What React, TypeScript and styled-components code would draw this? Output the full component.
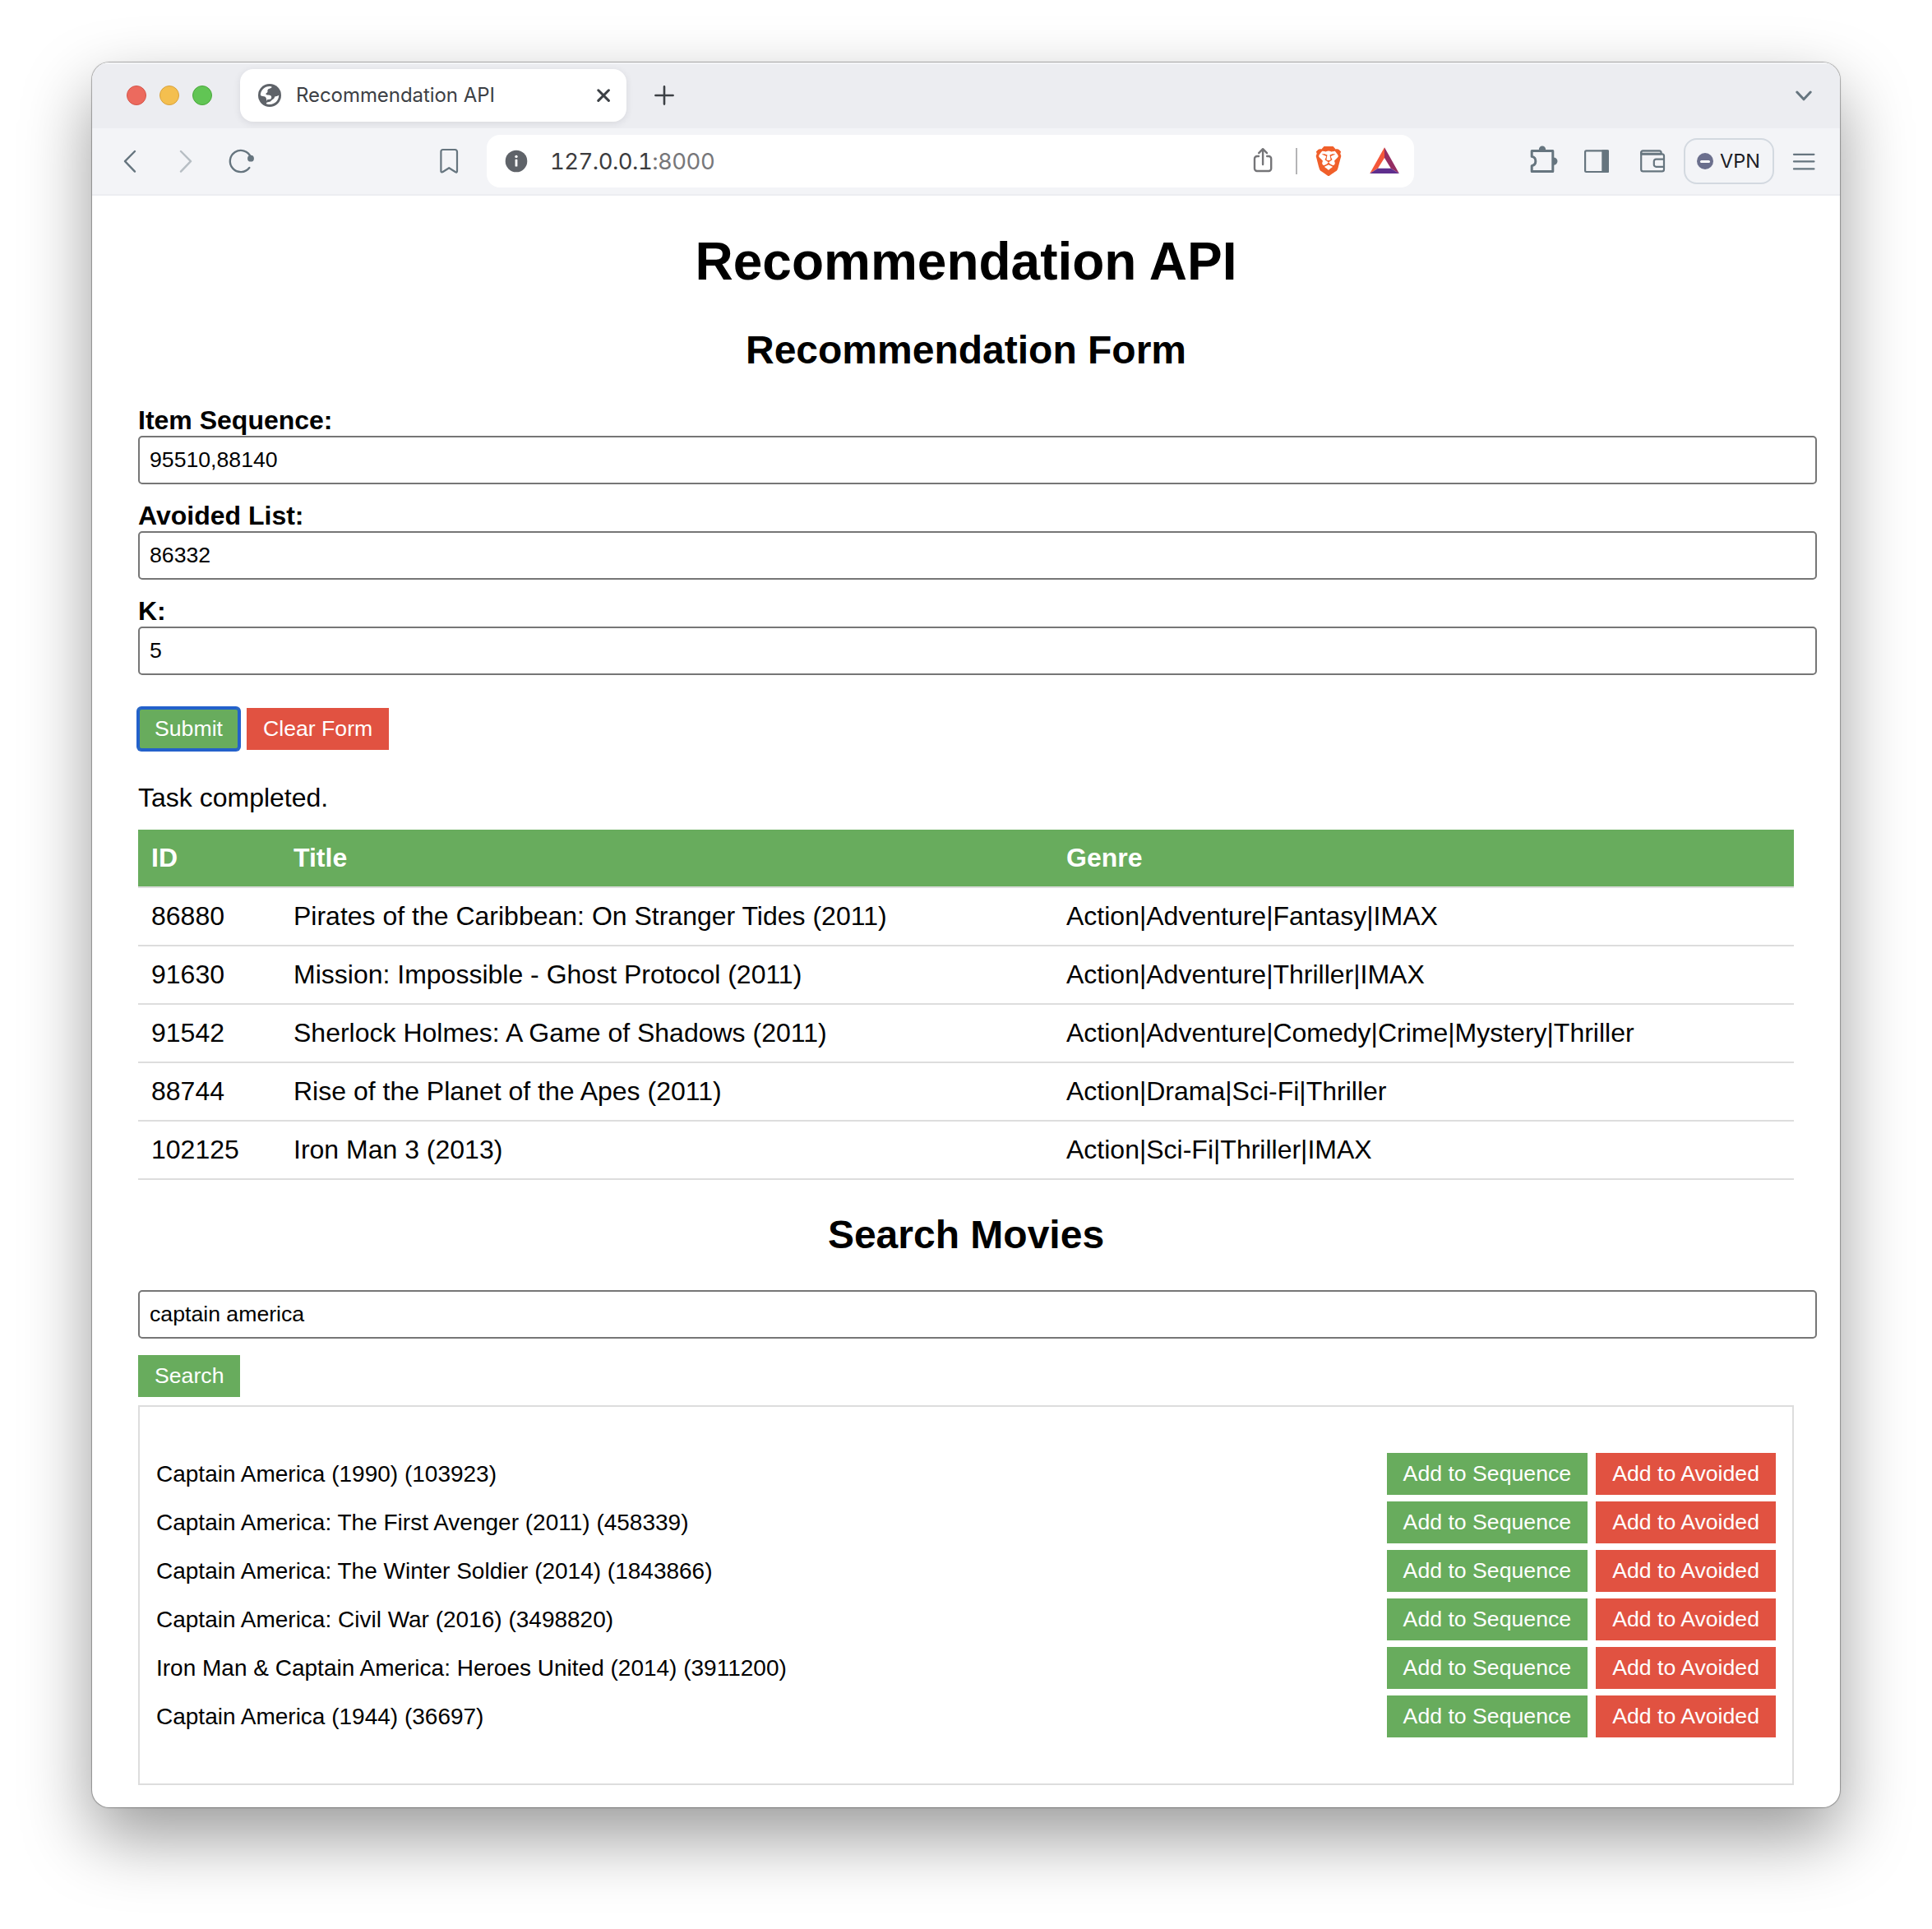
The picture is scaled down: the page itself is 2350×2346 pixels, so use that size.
import React from "react";
import styled, { createGlobalStyle } from "styled-components";
import { SiBrave } from "react-icons/si";

const GlobalStyle = createGlobalStyle`
  html, body { margin: 0; background: #fff; }
  body { font-family: "Liberation Sans", Arial, sans-serif; }
`;

const slate = "#66757f";
const green = "#68ac5d";
const red = "#e15241";
const uiFont = `Inter, "Liberation Sans", sans-serif`;

/* ---------- window ---------- */

const Desktop = styled.div`
  box-sizing: border-box;
  width: 2350px;
  height: 2346px;
  padding: 76px 112px 0;
  overflow: hidden;
  background: #fff;
`;

const Window = styled.div`
  height: 2122px;
  border-radius: 21px;
  background: #fff;
  overflow: hidden;
  display: flex;
  flex-direction: column;
  box-shadow: 0 0 0 1px rgba(0, 0, 0, 0.22), 0 0 3px rgba(0, 0, 0, 0.2), 0 36px 84px rgba(0, 0, 0, 0.4);
`;

const TabStrip = styled.div`
  flex: none;
  box-sizing: border-box;
  height: 80px;
  padding: 0 34px 0 42px;
  display: flex;
  align-items: center;
  background: #ecedf1;
  box-shadow: inset 0 2px 0 #f4f5f7;
`;

const Lights = styled.div`
  display: flex;
  gap: 16px;
  margin-right: 34px;
`;

const Light = styled.span<{ $fill: string; $edge: string }>`
  box-sizing: border-box;
  width: 24px;
  height: 24px;
  border-radius: 50%;
  background: ${(p) => p.$fill};
  border: 1px solid ${(p) => p.$edge};
`;

const Tab = styled.div`
  box-sizing: border-box;
  width: 470px;
  height: 64px;
  padding: 0 20px 0 22px;
  margin-right: 34px;
  display: flex;
  align-items: center;
  border-radius: 16px;
  background: #fff;
  box-shadow: 0 2px 8px rgba(40, 40, 60, 0.1);
`;

const TabTitle = styled.span`
  flex: 1;
  margin-left: 18px;
  font: 400 24px/32px ${uiFont};
  letter-spacing: -0.06px;
  color: #3c4045;
  white-space: nowrap;
`;

const Spacer = styled.span`
  flex: 1;
`;

const Toolbar = styled.div`
  flex: none;
  box-sizing: border-box;
  height: 82px;
  padding: 0 24px 0 28px;
  display: flex;
  align-items: center;
  background: #f3f4f7;
  border-bottom: 2px solid #ecedf1;
`;

const NavButtons = styled.div`
  display: flex;
  gap: 32px;
  margin-right: 216px;
`;

const AddressBar = styled.div`
  box-sizing: border-box;
  width: 1128px;
  height: 64px;
  margin-left: 28px;
  padding: 0 16px 0 22px;
  display: flex;
  align-items: center;
  border-radius: 16px;
  background: #fff;
`;

const Url = styled.span`
  margin-left: 27px;
  font: 400 27.5px/36px ${uiFont};
  font-variant-numeric: tabular-nums;
  letter-spacing: -0.55px;
  color: #3c3c3e;
`;

const Port = styled.span`
  color: #77777a;
`;

const Divider = styled.span`
  width: 2px;
  height: 32px;
  margin: 0 18px 0 22px;
  background: #b4b4b6;
`;

const Shield = styled.span`
  width: 40px;
  height: 40px;
  margin-right: 28px;
  display: flex;
  align-items: center;
  justify-content: center;
  color: #f05f2a;
`;

const Extensions = styled.div`
  display: flex;
  align-items: center;
  margin-left: auto;
`;

const ToolIcon = styled.span<{ $after: number }>`
  display: flex;
  margin-right: ${(p) => p.$after}px;
`;

const VpnButton = styled.div`
  box-sizing: border-box;
  width: 110px;
  height: 56px;
  margin-right: 16px;
  padding-left: 14px;
  display: flex;
  align-items: center;
  gap: 8px;
  border: 2px solid #d3d9e0;
  border-radius: 16px;
  font: 400 23.5px/32px ${uiFont};
  color: #1c1d26;
`;

const VpnDot = styled.span`
  width: 20px;
  height: 20px;
  border-radius: 50%;
  background: #6b6f8d;
  display: flex;
  align-items: center;
  justify-content: center;
  &::after {
    content: "";
    width: 12px;
    height: 3px;
    border-radius: 2px;
    background: #fff;
  }
`;

/* ---------- page ---------- */

const Page = styled.main`
  flex: 1;
  padding: 43px 56px 0;
  color: #000;
  font-size: 32px;
  line-height: 37px;
`;

const Title = styled.h1`
  margin: 0 0 43px;
  font-size: 64px;
  line-height: 74px;
  text-align: center;
`;

const Heading = styled.h2`
  margin: 0 0 40px;
  font-size: 48px;
  line-height: 55px;
  text-align: center;
`;

const Field = styled.label`
  display: block;
  font-weight: bold;
`;

const TextInput = styled.input`
  display: block;
  box-sizing: border-box;
  width: calc(100% + 28px);
  height: 59px;
  margin: 0 0 20px;
  padding: 12px;
  border: 2px solid #767676;
  border-radius: 5px;
  outline: none;
  background: #fff;
  color: #000;
  font: 400 26.67px/31px "Liberation Sans", Arial, sans-serif;
`;

const Button = styled.button<{ $tone: string; $focused?: boolean }>`
  height: 51px;
  margin: 0;
  padding: 0 20px;
  border: none;
  background: ${(p) => p.$tone};
  color: #fff;
  font: 400 26.67px/31px "Liberation Sans", Arial, sans-serif;
  white-space: nowrap;
  ${(p) => p.$focused && `
    border-radius: 4px;
    box-shadow: 0 0 0 2px #2361cb, inset 0 0 0 2px #2361cb;
  `}
`;

const FormActions = styled.div`
  display: flex;
  gap: 9px;
  padding-top: 20px;
  margin-bottom: 40px;
`;

const Status = styled.p`
  margin: 0 0 20px;
`;

const Table = styled.table`
  width: 100%;
  margin-bottom: 39px;
  table-layout: fixed;
  border-collapse: separate;
  border-spacing: 0;
`;

const Column = styled.col<{ $w?: number }>`
  ${(p) => p.$w && `width: ${p.$w}px;`}
`;

const HeadCell = styled.th`
  height: 37px;
  padding: 16px;
  text-align: left;
  background: ${green};
  background-clip: padding-box;
  color: #fff;
  border-bottom: 2px solid #ddd;
`;

const Cell = styled.td`
  height: 37px;
  padding: 16px;
  border-bottom: 2px solid #ddd;
`;

const Results = styled.div`
  margin-top: 10px;
  padding: 20px;
  border: 2px solid #ddd;
`;

const ResultList = styled.ul`
  list-style: none;
  margin: 32px 0;
  padding: 0;
`;

const ResultRow = styled.li`
  display: flex;
  align-items: center;
  gap: 10px;
  height: 51px;
  padding: 4px 0;
  font-size: 28px;
  line-height: 32px;
`;

const ResultName = styled.span`
  flex: 1;
`;

/* ---------- icons ---------- */

type IconProps = { size: number; color?: string; width?: number; opacity?: number; children: React.ReactNode };

const IconSvg = styled.svg`
  flex: none;
  fill: none;
  stroke-linecap: round;
  stroke-linejoin: round;
`;

const Icon = ({ size, color = slate, width = 2.4, opacity = 1, children }: IconProps) => (
  <IconSvg
    width={size}
    height={size}
    viewBox={`0 0 ${size} ${size}`}
    stroke={color}
    strokeWidth={width}
    opacity={opacity}
  >
    {children}
  </IconSvg>
);

const Globe = () => (
  <Icon size={28} color="none">
    <circle cx="14" cy="14" r="14" fill="#5f6369" />
    <path
      fill="#fff"
      d="M2.8 13.2C3.2 7.6 8 3 13.6 2.9C15.4 2.9 16.4 3.2 16.6 3.6C16.7 4.6 15.6 5.2 14.4 5.6C13 6.1 11.6 6.6 11.4 8C11.3 9.2 11.8 9.8 11 10.6C10.2 11.2 9.4 11.6 9.4 12.6C9.6 13.6 11 13.4 12.4 13.6C14.8 13.8 16.4 14.6 16.2 16.4C16 17.8 15 18.6 13.6 18.8C12.2 19 10.6 19 10.3 20.4L10 21V18.4C9.8 16.4 8.8 15.4 7 15.2C5.4 15 3 14.8 2.8 13.2Z"
    />
    <path
      fill="#fff"
      d="M25.2 13.8C25.2 20 20.4 25 14.2 25.1C12.2 25.1 10.8 24.7 10 24.3C9.6 23.2 10.4 22.4 11.8 22.2L15 21.6C15.8 20.6 16.4 19.6 17.6 19C19.4 18 19.8 16.8 20.2 15.4C21.6 15.4 23.6 15 25.2 13.8Z"
    />
  </Icon>
);

const Close = () => (
  <Icon size={16} color="#3c4045" width={3}>
    <path d="M1.8 1.8l12.6 12.6M14.4 1.8L1.8 14.4" />
  </Icon>
);

const Plus = () => (
  <Icon size={24} color="#3c4045" width={2.6}>
    <path d="M12 1.4v21.2M1.4 12h21.2" />
  </Icon>
);

const ChevronDown = () => (
  <Icon size={20} width={3}>
    <path d="M1.8 6l8.2 8.8L18.2 6" />
  </Icon>
);

const Back = () => (
  <Icon size={36}>
    <path d="M24 6L12 18.2L24 30.6" />
  </Icon>
);

const Forward = () => (
  <Icon size={36} opacity={0.42}>
    <path d="M12 6L24 18.2L12 30.6" />
  </Icon>
);

const Reload = () => (
  <Icon size={36}>
    <path d="M29 13A13.1 13.1 0 1 0 27.3 26" />
    <circle cx="29" cy="14.7" r="3.9" fill={slate} stroke="none" />
  </Icon>
);

const Bookmark = () => (
  <Icon size={36} width={2.2}>
    <path d="M8.4 6.4a2.4 2.4 0 0 1 2.4-2.4h14.8a2.4 2.4 0 0 1 2.4 2.4v23.8c0 1.2-1 1.7-1.9 1L18.2 26.2L10.3 31.2c-.9.6-1.9.2-1.9-1z" />
  </Icon>
);

const Info = () => (
  <Icon size={28} color="none">
    <circle cx="14" cy="14" r="13.3" fill="#5f6369" />
    <circle cx="14" cy="8.4" r="1.7" fill="#fff" />
    <rect x="12.6" y="11.8" width="2.8" height="8.8" rx="0.6" fill="#fff" />
  </Icon>
);

const Share = () => (
  <Icon size={36} color="#757578" width={2.4}>
    <path d="M13 12h-2a3 3 0 0 0-3 3v12a3 3 0 0 0 3 3h14.2a3 3 0 0 0 3-3V15a3 3 0 0 0-3-3h-2" />
    <path d="M18.1 22V3.6M13.2 8.2L18.1 3.2L23 8.2" />
  </Icon>
);

const Rewards = () => (
  <svg width="40" height="40" viewBox="0 0 40 40">
    <path fill="#f4573a" d="M20 3.2V16L12 28.8L2.2 35Z" />
    <path fill="#952d62" d="M20 3.2L37.9 35L27.8 28.8L20 16Z" />
    <path fill="#5f2f8e" d="M2.2 35L12 28.8H27.8L37.9 35Z" />
  </svg>
);

const Puzzle = () => (
  <Icon size={40} width={3}>
    <path d="M5.2 14.4V7.4H30.8V32.4H5.2V25.6A5.7 5.7 0 0 0 5.2 14.4Z" />
    <path d="M13.8 6.4a4.2 5 0 0 1 8.4 0zM31.6 15.4a4.9 4.7 0 0 1 0 9.4z" fill={slate} stroke="none" />
  </Icon>
);

const Sidebar = () => (
  <Icon size={40} width={2.2}>
    <rect x="6.1" y="7.4" width="27.8" height="25.6" rx="1.4" />
    <path d="M27.4 7.4H33.9V33H27.4Z" fill={slate} />
  </Icon>
);

const Wallet = () => (
  <Icon size={40} width={2.2}>
    <path d="M30.6 11.4V9.8a2.4 2.4 0 0 0-2.4-2.4H8.2a2 2 0 0 0-2 2v2z" fill="#cfd4d8" />
    <path d="M6.2 9.4V30a2.4 2.4 0 0 0 2.4 2.4h23a2.4 2.4 0 0 0 2.4-2.4V13.8a2.4 2.4 0 0 0-2.4-2.4H6.2" />
    <path d="M34 17.6H24.4a2.6 2.6 0 0 0-2.6 2.6v4a2.6 2.6 0 0 0 2.6 2.6H34" />
  </Icon>
);

const Burger = () => (
  <Icon size={40} width={2.3}>
    <path d="M8 11.8H32.4M8 20.4H32.4M8 29.4H32.4" />
  </Icon>
);

/* ---------- data ---------- */

const fields = [
  { label: "Item Sequence:", value: "95510,88140" },
  { label: "Avoided List:", value: "86332" },
  { label: "K:", value: "5" },
];

const recommendations = [
  ["86880", "Pirates of the Caribbean: On Stranger Tides (2011)", "Action|Adventure|Fantasy|IMAX"],
  ["91630", "Mission: Impossible - Ghost Protocol (2011)", "Action|Adventure|Thriller|IMAX"],
  ["91542", "Sherlock Holmes: A Game of Shadows (2011)", "Action|Adventure|Comedy|Crime|Mystery|Thriller"],
  ["88744", "Rise of the Planet of the Apes (2011)", "Action|Drama|Sci-Fi|Thriller"],
  ["102125", "Iron Man 3 (2013)", "Action|Sci-Fi|Thriller|IMAX"],
];

const movies = [
  "Captain America (1990) (103923)",
  "Captain America: The First Avenger (2011) (458339)",
  "Captain America: The Winter Soldier (2014) (1843866)",
  "Captain America: Civil War (2016) (3498820)",
  "Iron Man & Captain America: Heroes United (2014) (3911200)",
  "Captain America (1944) (36697)",
];

/* ---------- app ---------- */

const BrowserChrome = () => (
  <>
    <TabStrip>
      <Lights>
        <Light $fill="#ec6a5e" $edge="#d55549" />
        <Light $fill="#f4bf4f" $edge="#d9a23c" />
        <Light $fill="#61c554" $edge="#4aa73c" />
      </Lights>
      <Tab>
        <Globe />
        <TabTitle>Recommendation API</TabTitle>
        <Close />
      </Tab>
      <Plus />
      <Spacer />
      <ChevronDown />
    </TabStrip>
    <Toolbar>
      <NavButtons>
        <Back />
        <Forward />
        <Reload />
      </NavButtons>
      <Bookmark />
      <AddressBar>
        <Info />
        <Url>
          127.0.0.1<Port>:8000</Port>
        </Url>
        <Spacer />
        <Share />
        <Divider />
        <Shield>
          <SiBrave size={36} />
        </Shield>
        <Rewards />
      </AddressBar>
      <Extensions>
        <ToolIcon $after={24}><Puzzle /></ToolIcon>
        <ToolIcon $after={28}><Sidebar /></ToolIcon>
        <ToolIcon $after={18}><Wallet /></ToolIcon>
        <VpnButton>
          <VpnDot />
          VPN
        </VpnButton>
        <ToolIcon $after={0}><Burger /></ToolIcon>
      </Extensions>
    </Toolbar>
  </>
);

export default function App() {
  return (
    <>
      <GlobalStyle />
      <Desktop>
        <Window>
          <BrowserChrome />
          <Page>
            <Title>Recommendation API</Title>
            <Heading>Recommendation Form</Heading>
            {fields.map((f) => (
              <Field key={f.label}>
                {f.label}
                <TextInput defaultValue={f.value} />
              </Field>
            ))}
            <FormActions>
              <Button $tone={green} $focused>Submit</Button>
              <Button $tone={red}>Clear Form</Button>
            </FormActions>
            <Status>Task completed.</Status>
            <Table>
              <colgroup>
                <Column $w={173} />
                <Column $w={940} />
                <Column />
              </colgroup>
              <thead>
                <tr>
                  <HeadCell>ID</HeadCell>
                  <HeadCell>Title</HeadCell>
                  <HeadCell>Genre</HeadCell>
                </tr>
              </thead>
              <tbody>
                {recommendations.map((row) => (
                  <tr key={row[0]}>
                    {row.map((text) => (
                      <Cell key={text}>{text}</Cell>
                    ))}
                  </tr>
                ))}
              </tbody>
            </Table>
            <Heading>Search Movies</Heading>
            <TextInput defaultValue="captain america" />
            <Button $tone={green}>Search</Button>
            <Results>
              <ResultList>
                {movies.map((name) => (
                  <ResultRow key={name}>
                    <ResultName>{name}</ResultName>
                    <Button $tone={green}>Add to Sequence</Button>
                    <Button $tone={red}>Add to Avoided</Button>
                  </ResultRow>
                ))}
              </ResultList>
            </Results>
          </Page>
        </Window>
      </Desktop>
    </>
  );
}
